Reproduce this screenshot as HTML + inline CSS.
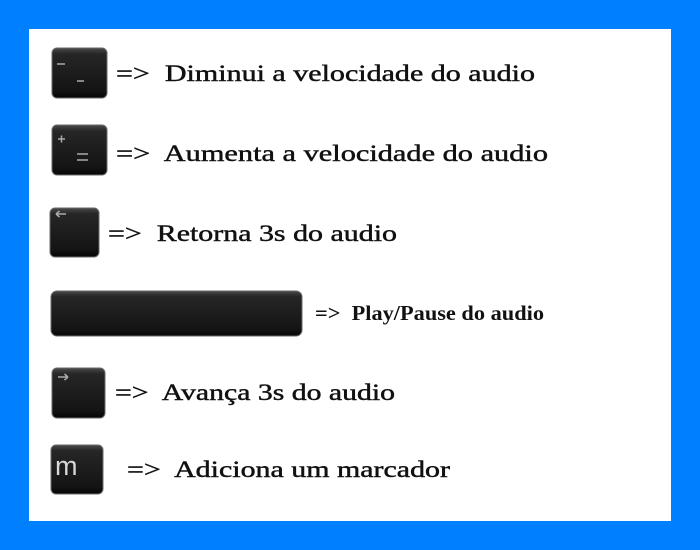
<!DOCTYPE html>
<html><head><style>
html,body{margin:0;padding:0;width:700px;height:550px;overflow:hidden;background:#0080fe}
</style></head><body>
<svg width="700" height="550" xmlns="http://www.w3.org/2000/svg" style="display:block">
<defs>
<linearGradient id="k" x1="0" y1="0" x2="0" y2="1">
<stop offset="0" stop-color="#4a4a4a"/><stop offset="0.12" stop-color="#262626"/><stop offset="0.85" stop-color="#141414"/><stop offset="1" stop-color="#050505"/>
</linearGradient>
</defs>
<rect x="0" y="0" width="700" height="550" fill="#0080fe"/>
<rect x="29" y="29" width="642" height="492" fill="#fff"/>
<g stroke="#6a6a6a" stroke-width="1" fill="url(#k)">
<rect x="52" y="48" width="55" height="50" rx="5"/>
<rect x="52" y="125" width="55" height="50" rx="5"/>
<rect x="50" y="208" width="49" height="49" rx="5"/>
<rect x="51" y="291" width="251" height="45" rx="6"/>
<rect x="52" y="368" width="53" height="50" rx="5"/>
<rect x="51" y="445" width="52" height="49" rx="5"/>
</g>
<g stroke="#aaa" stroke-width="1.5" fill="none">
<path d="M57 64h8M77 81h7"/>
<path d="M58 139h7M61.5 135.5v7M77 154h11M77 160h11"/>
<path d="M56 214h10M56 214l3.5-3M56 214l3.5 3"/>
<path d="M58 377h10M68 377l-3.5-3M68 377l-3.5 3"/>
</g>
<text x="55" y="475" font-family="Liberation Sans, sans-serif" font-size="27" fill="#d8d8d8">m</text>
<g font-family="Liberation Serif, serif" font-size="23" fill="#111" stroke="#111" stroke-width="0.45">
<text x="116" y="81" textLength="419" lengthAdjust="spacingAndGlyphs" xml:space="preserve">=&gt;  Diminui a velocidade do audio</text>
<text x="116" y="161" textLength="432" lengthAdjust="spacingAndGlyphs" xml:space="preserve">=&gt;  Aumenta a velocidade do audio</text>
<text x="108" y="241" textLength="289" lengthAdjust="spacingAndGlyphs" xml:space="preserve">=&gt;  Retorna 3s do audio</text>
<text x="115" y="400" textLength="280" lengthAdjust="spacingAndGlyphs" xml:space="preserve">=&gt;  Avança 3s do audio</text>
<text x="127" y="477" textLength="323" lengthAdjust="spacingAndGlyphs" xml:space="preserve">=&gt;  Adiciona um marcador</text>
<text x="315" y="320" font-size="21" font-weight="bold" stroke-width="0" textLength="229" lengthAdjust="spacingAndGlyphs" xml:space="preserve">=&gt;  Play/Pause do audio</text>
</g>
</svg>
</body></html>
